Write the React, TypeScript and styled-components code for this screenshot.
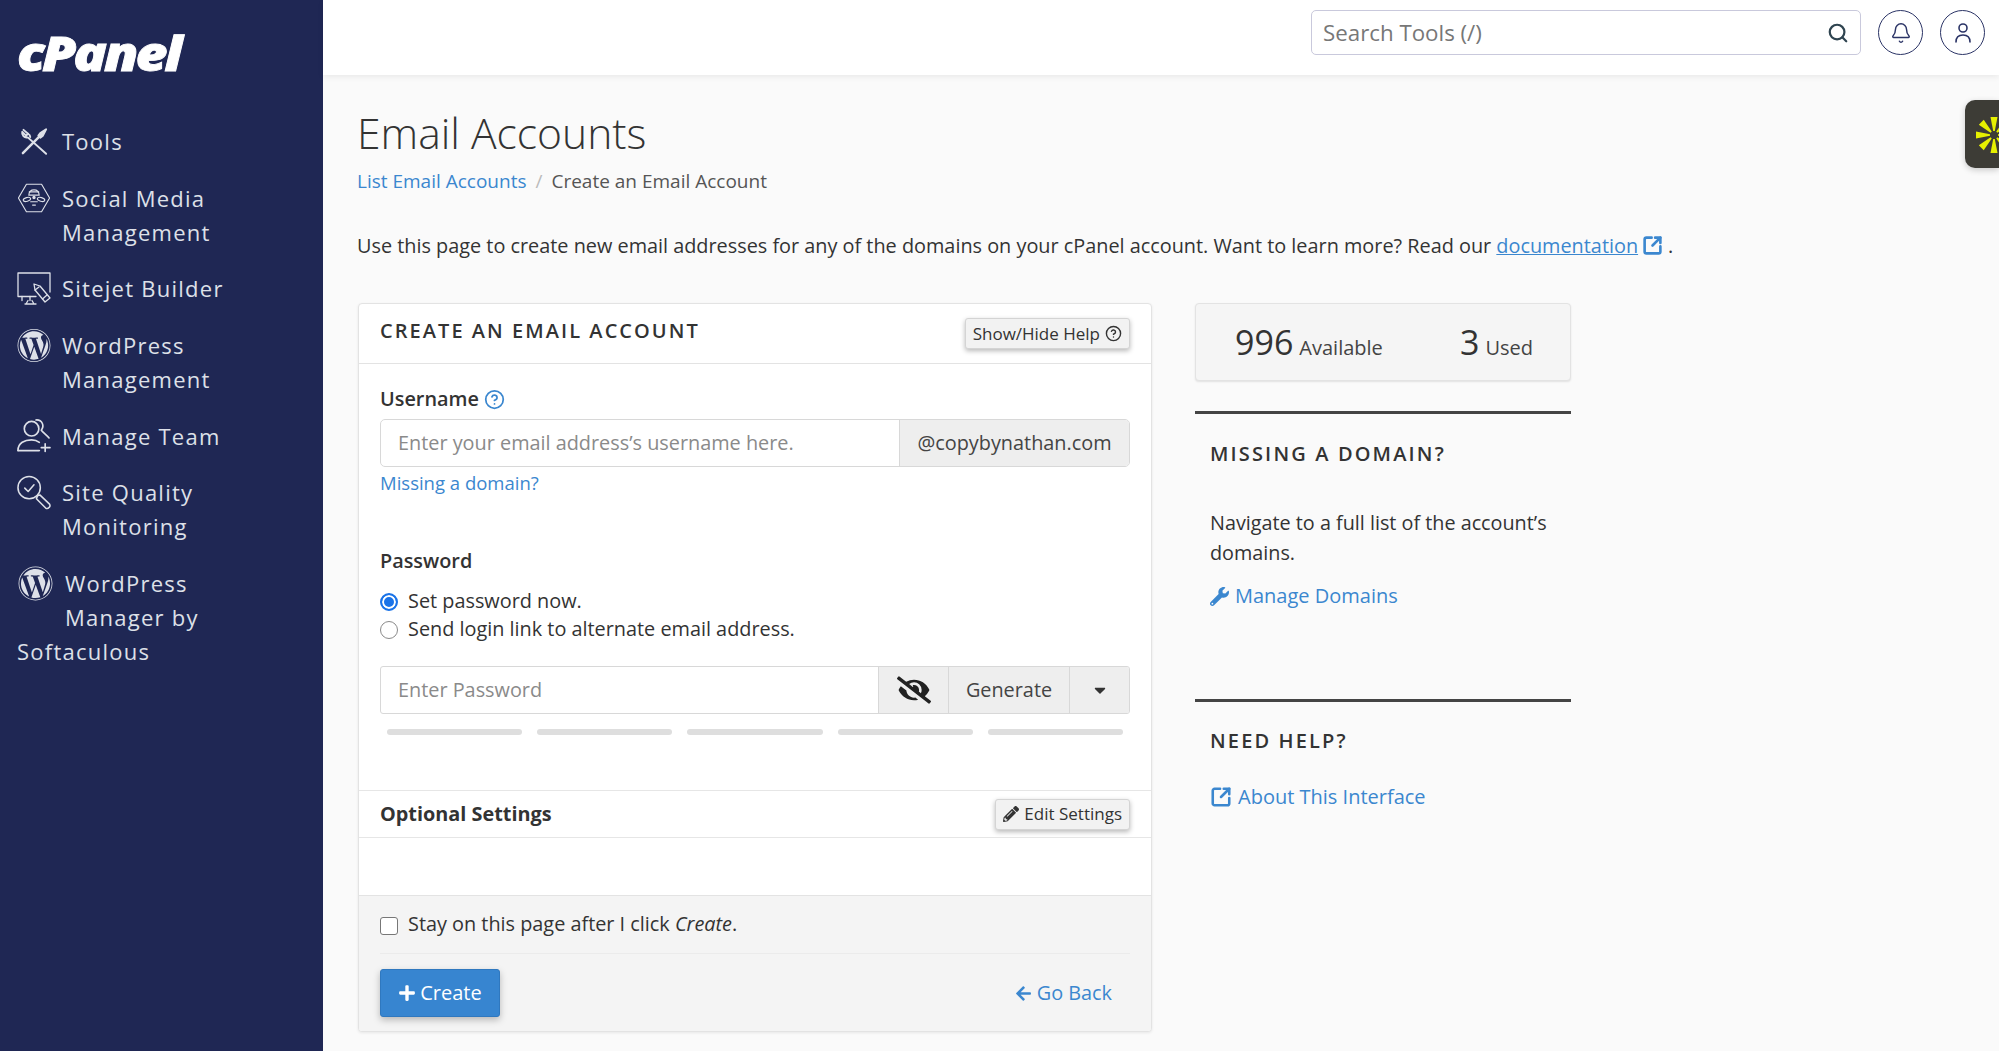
import React from "react";
import styled, { createGlobalStyle } from "styled-components";
import { FaWordpress, FaWrench, FaPencilAlt, FaPlus, FaArrowLeft, FaEyeSlash, FaCaretDown } from "react-icons/fa";
import { Search, Bell, SquareArrowOutUpRight, CircleHelp } from "lucide-react";

const Global = createGlobalStyle`
  html, body { margin: 0; padding: 0; background: #fafafa; }
  body { font-family: "Open Sans", "Liberation Sans", sans-serif; color: #333; font-size: 19.85px; line-height: 28px; }
  * { box-sizing: border-box; }
`;

const Page = styled.div`
  display: flex;
  min-height: 100vh;
  position: relative;
  overflow: hidden;
`;

const Sidebar = styled.aside`
  width: 323px;
  flex: none;
  background: #1f2754;
  color: #dde0e8;
  padding: 0 17px;
`;

const Logo = styled.div`
  height: 106px;
  padding-top: 23px;
  font: italic 800 47px/60px "Open Sans", sans-serif;
  letter-spacing: -2.6px;
  color: #fff;
  -webkit-text-stroke: 0.8px #fff;
  transform: scaleX(1.18);
  transform-origin: left center;
`;

const Nav = styled.nav`
  display: flex;
  flex-direction: column;
  padding-top: 18px;
  gap: 22.7px;
`;

const NavItem = styled.a`
  display: flex;
  gap: 11px;
  font-size: 22px;
  line-height: 34px;
  letter-spacing: 1.25px;
`;

const NavIcon = styled.span`
  flex: none;
  width: 34px;
  height: 34px;
  display: flex;
  align-items: center;
  justify-content: center;
  color: #dde0e8;
`;

const NavLabel = styled.span`
  width: 190px;
`;

const FloatItem = styled.a`
  display: block;
  font-size: 22px;
  line-height: 34px;
  letter-spacing: 1.25px;
  width: 200px;
`;

const FloatIcon = styled.span`
  float: left;
  width: 48px;
  height: 66px;
  padding-left: 1px;
  display: block;
  color: #dde0e8;
`;

const Main = styled.div`
  flex: 1;
  min-width: 0;
  display: flex;
  flex-direction: column;
`;

const TopBar = styled.header`
  height: 75px;
  background: #fff;
  box-shadow: 0 2px 6px rgba(0, 0, 0, 0.07);
  display: flex;
  align-items: center;
  justify-content: flex-end;
  padding: 0 14px 10px 0;
  gap: 17px;
`;

const SearchBox = styled.div`
  width: 550px;
  height: 45px;
  border: 1.5px solid #c9c9dc;
  border-radius: 5px;
  display: flex;
  align-items: center;
  justify-content: space-between;
  padding: 0 11px 0 11px;
  font-size: 22.3px;
  color: #777;
  background: #fff;
`;

const RoundButton = styled.button`
  width: 45px;
  height: 45px;
  border-radius: 50%;
  border: 1.5px solid #2b3466;
  background: #fff;
  padding: 0;
  display: flex;
  align-items: center;
  justify-content: center;
  color: #2b3466;
`;

const Widget = styled.div`
  position: absolute;
  top: 100px;
  right: 0;
  width: 34px;
  height: 68px;
  background: #3d3c36;
  border-radius: 10px 0 0 10px;
  box-shadow: 0 2px 6px rgba(0, 0, 0, 0.2);
  overflow: hidden;
`;

const Content = styled.main`
  padding: 32px 0 0 34px;
`;

const Title = styled.h1`
  margin: 0;
  font-weight: 300;
  font-size: 42.6px;
  line-height: 50px;
  color: #333;
`;

const Crumbs = styled.div`
  margin-top: 10px;
  display: flex;
  gap: 9px;
  color: #555;
  font-size: 19px;
`;

const Sep = styled.span`
  color: #bbb;
`;

const Link = styled.a`
  color: #3b87cf;
`;

const Description = styled.p`
  margin: 37px 0 0;
  color: #333;
  white-space: nowrap;
`;

const DocLink = styled.a`
  color: #3b87cf;
  text-decoration: underline;
`;

const InlineIcon = styled.span`
  display: inline-flex;
  vertical-align: -3px;
  color: #3b87cf;
  margin-left: 4px;
  margin-right: 5px;
`;

const Columns = styled.div`
  margin: 43px 0 0 1px;
  display: flex;
  align-items: flex-start;
  gap: 43px;
`;

const Card = styled.section`
  width: 794px;
  height: 729px;
  border: 1.5px solid #e3e3e3;
  border-radius: 4px;
  background: #fff;
  box-shadow: 0 1px 3px rgba(0, 0, 0, 0.08);
  display: flex;
  flex-direction: column;
  overflow: hidden;
`;

const CardHeader = styled.div`
  height: 60px;
  flex: none;
  border-bottom: 1.5px solid #e3e3e3;
  padding: 13px 21px 0;
  display: flex;
  justify-content: space-between;
  align-items: flex-start;
`;

const CardTitle = styled.h2`
  margin: 0;
  font-size: 20px;
  line-height: 28px;
  font-weight: 600;
  letter-spacing: 2.05px;
  color: #333;
`;

const SmallButton = styled.button`
  height: 31px;
  padding: 0 7px;
  font: 400 17px/28px "Open Sans", sans-serif;
  color: #333;
  background: #f2f2f2;
  border: 1.5px solid #d4d4d4;
  border-radius: 3px;
  box-shadow: 0 2px 5px rgba(0, 0, 0, 0.28);
  display: flex;
  align-items: center;
  gap: 5px;
  white-space: nowrap;
`;

const HelpButton = styled(SmallButton)`
  margin-top: 1px;
`;

const FormBody = styled.div`
  flex: 1;
  padding: 21px 21px 0;
`;

const FieldLabel = styled.div`
  font-weight: 600;
  color: #333;
  display: flex;
  align-items: center;
  gap: 5px;
`;

const SpacedLabel = styled(FieldLabel)`
  margin-top: 50px;
`;

const InputGroup = styled.div`
  display: flex;
  height: 48px;
  margin-top: 6px;
  border: 1.5px solid #d8d8d8;
  border-radius: 5px;
  overflow: hidden;
  background: #fff;
`;

const PasswordGroup = styled(InputGroup)`
  margin-top: 23px;
  border-radius: 3px;
`;

const Placeholder = styled.div`
  flex: 1;
  padding-left: 17px;
  display: flex;
  align-items: center;
  color: #8a8a8a;
`;

const Addon = styled.div<{ $w: number }>`
  width: ${(p) => p.$w}px;
  flex: none;
  background: #eeeeee;
  border-left: 1.5px solid #d8d8d8;
  display: flex;
  align-items: center;
  justify-content: center;
  color: #444;
`;

const DomainLink = styled(Link)`
  display: block;
  margin-top: 2px;
  font-size: 18.5px;
`;

const Radios = styled.div`
  margin-top: 12px;
`;

const OptionRow = styled.label`
  display: flex;
  align-items: center;
  gap: 10px;
  color: #333;
`;

const RadioMark = styled.span<{ $on?: boolean }>`
  width: 18px;
  height: 18px;
  border-radius: 50%;
  flex: none;
  margin-top: 2px;
  border: ${(p) => (p.$on ? "2px solid #1a73e8" : "1.5px solid #8a8a8a")};
  background: ${(p) => (p.$on ? "#1a73e8" : "#fff")};
  box-shadow: ${(p) => (p.$on ? "inset 0 0 0 2px #fff" : "none")};
`;

const CheckMark = styled.span`
  width: 18px;
  height: 18px;
  flex: none;
  margin-top: 3px;
  border: 1.5px solid #777;
  border-radius: 3px;
  background: #fff;
`;

const Bars = styled.div`
  margin-top: 15px;
  padding: 0 7px;
  display: flex;
  gap: 15px;
`;

const Bar = styled.div`
  flex: 1;
  height: 6px;
  border-radius: 3px;
  background: #dedede;
`;

const OptionalRow = styled.div`
  flex: none;
  height: 48px;
  margin-bottom: 57px;
  border-top: 1.5px solid #e6e6e6;
  border-bottom: 1.5px solid #e6e6e6;
  padding: 0 21px;
  display: flex;
  justify-content: space-between;
  align-items: center;
`;

const OptionalTitle = styled.div`
  font-weight: 700;
  color: #333;
`;

const Footer = styled.div`
  flex: none;
  height: 136px;
  background: #f4f4f4;
  border-top: 1.5px solid #e3e3e3;
  padding: 14px 21px 0;
`;

const FooterDivider = styled.div`
  height: 1px;
  margin-top: 15px;
  background: #ebebeb;
`;

const Actions = styled.div`
  margin-top: 15px;
  display: flex;
  justify-content: space-between;
  align-items: center;
  padding-right: 18px;
`;

const CreateButton = styled.button`
  width: 120px;
  height: 48px;
  background: #3785d0;
  border: 1px solid #2f78bf;
  border-radius: 3px;
  color: #fff;
  font: 400 20px/28px "Open Sans", sans-serif;
  box-shadow: 0 3px 7px rgba(0, 0, 0, 0.25);
  display: flex;
  align-items: center;
  justify-content: center;
  gap: 4px;
`;

const BackLink = styled(Link)`
  display: flex;
  align-items: center;
  gap: 5px;
`;

const Aside = styled.aside`
  width: 376px;
`;

const StatBox = styled.div`
  height: 78px;
  background: #f5f5f5;
  border: 1.5px solid #e3e3e3;
  border-radius: 4px;
  box-shadow: 0 1px 2px rgba(0, 0, 0, 0.1);
  display: flex;
  align-items: center;
  padding-left: 39px;
  color: #444;
  font-size: 20px;
`;

const Stat = styled.div<{ $w: number }>`
  width: ${(p) => p.$w}px;
  display: flex;
  align-items: baseline;
  gap: 6px;
`;

const StatNumber = styled.span`
  font-size: 34px;
  line-height: 44px;
  color: #333;
`;

const Block = styled.div<{ $top: number; $pad: number }>`
  margin-top: ${(p) => p.$top}px;
  border-top: 3px solid #444;
  padding: ${(p) => p.$pad}px 15px 0;
`;

const BlockTitle = styled.h3`
  margin: 0;
  font-size: 20px;
  line-height: 28px;
  font-weight: 600;
  letter-spacing: 2.15px;
  color: #333;
`;

const BlockText = styled.p`
  margin: 40px 0 0;
  line-height: 30px;
  font-size: 19.8px;
  color: #333;
`;

const BlockLink = styled(Link)<{ $top: number }>`
  margin-top: ${(p) => p.$top}px;
  font-size: 20px;
  display: flex;
  align-items: center;
  gap: 6px;
`;

function ToolsIcon() {
  return (
    <svg width="31" height="31" viewBox="0 0 24 24" fill="none" stroke="currentColor" strokeWidth="1.5" strokeLinecap="round" strokeLinejoin="round">
      <path d="M3.5 3 L7 6 L5.5 7.5 L2.5 4.5 C2 7 4 9.5 6.8 8.8 L21 21.5" />
      <path d="M7 6 C8 6.5 8.7 7.5 8.7 8.5" />
      <path d="M21 2.5 L18.5 7.5 L16.5 9 L15 7.5 L16.5 5.5 Z" fill="currentColor" />
      <path d="M15.5 8.5 L3 21" strokeWidth="1.9" />
    </svg>
  );
}

function SocialIcon() {
  return (
    <svg width="36" height="32" viewBox="0 0 36 32" fill="none" stroke="currentColor" strokeWidth="1.2" strokeLinejoin="round" strokeLinecap="round">
      <path d="M10 1.5 H26 L34.5 16 L26 30.5 H10 L1.5 16 Z" />
      <path d="M12.5 13 C13 5.5 23 5.5 23.5 13 Z" />
      <path d="M13 9.5 H23" />
      <ellipse cx="10.5" cy="17.5" rx="4" ry="2" transform="rotate(-15 10.5 17.5)" />
      <ellipse cx="25.5" cy="17.5" rx="4" ry="2" transform="rotate(15 25.5 17.5)" />
      <circle cx="18" cy="15.5" r="1.2" fill="currentColor" />
      <path d="M14.5 20 H21.5 M16.5 23.5 H19.5" />
    </svg>
  );
}

function SitejetIcon() {
  return (
    <svg width="34" height="33" viewBox="0 0 34 33" fill="none" stroke="currentColor" strokeWidth="1.3" strokeLinejoin="round" strokeLinecap="round">
      <path d="M19 24.5 H1 V1 H33 V20" />
      <path d="M5 24.5 V28.5 M13 24.5 L13 28.5 M8 32 H19 M11 28.5 L9 32 M15 28.5 L17 32" />
      <path d="M17 12 L18 18 L28 30 L33 26 L23 14 Z" />
      <path d="M18 18 L22 15 M25.5 27 L30 23" />
    </svg>
  );
}

function TeamIcon() {
  return (
    <svg width="35" height="35" viewBox="0 0 35 35" fill="none" stroke="currentColor" strokeWidth="1.7" strokeLinecap="round" strokeLinejoin="round">
      <circle cx="15" cy="10.5" r="7.5" />
      <path d="M1 33 C1 25 8 22 15 22 C18 22 21 23 23 24.5" />
      <path d="M1 33 H23" />
      <path d="M19.5 1.5 C26 1 28.5 7.5 25 12 C27.5 15 30 16.5 33 20" />
      <path d="M29 26 V34 M25 30 H34" />
    </svg>
  );
}

function QualityIcon() {
  return (
    <svg width="35" height="35" viewBox="0 0 35 35" fill="none" stroke="currentColor" strokeWidth="1.6" strokeLinecap="round" strokeLinejoin="round">
      <circle cx="12.5" cy="12.5" r="11.5" />
      <path d="M8 13 L11.5 16.5 L17.5 9.5" />
      <path d="M21 21 L23.5 20 L33.5 29.5 C35 32 32 35 29.5 33.5 L20 24 Z" />
    </svg>
  );
}

function UserIcon() {
  return (
    <svg width="20" height="22" viewBox="0 0 20 22" fill="none" stroke="currentColor" strokeWidth="1.6" strokeLinecap="round">
      <circle cx="10" cy="6" r="4" />
      <path d="M3 20 C3 15 6 13 10 13 C14 13 17 15 17 20" />
    </svg>
  );
}

function BurstIcon() {
  const spokes = [0, 45, 90, 135, 180, 225, 270, 315];
  return (
    <svg width="48" height="68" viewBox="0 0 48 68">
      {spokes.map((a) => (
        <polygon key={a} points="28.2,31 29.8,31 32.5,17 25.5,17" fill="#e6f000" transform={`rotate(${a} 29 35)`} />
      ))}
    </svg>
  );
}

export default function App() {
  return (
    <Page>
      <Global />
      <Sidebar>
        <Logo>cPanel</Logo>
        <Nav>
          <NavItem><NavIcon><ToolsIcon /></NavIcon><NavLabel>Tools</NavLabel></NavItem>
          <NavItem><NavIcon><SocialIcon /></NavIcon><NavLabel>Social Media Management</NavLabel></NavItem>
          <NavItem><NavIcon><SitejetIcon /></NavIcon><NavLabel>Sitejet Builder</NavLabel></NavItem>
          <NavItem><NavIcon><FaWordpress size={35} /></NavIcon><NavLabel>WordPress Management</NavLabel></NavItem>
          <NavItem><NavIcon><TeamIcon /></NavIcon><NavLabel>Manage Team</NavLabel></NavItem>
          <NavItem><NavIcon><QualityIcon /></NavIcon><NavLabel>Site Quality Monitoring</NavLabel></NavItem>
          <FloatItem><FloatIcon><FaWordpress size={35} /></FloatIcon>WordPress Manager by Softaculous</FloatItem>
        </Nav>
      </Sidebar>
      <Main>
        <TopBar>
          <SearchBox>Search Tools (/)<Search size={22} color="#2f4450" strokeWidth={2.4} /></SearchBox>
          <RoundButton><Bell size={22} strokeWidth={1.6} /></RoundButton>
          <RoundButton><UserIcon /></RoundButton>
        </TopBar>
        <Content>
          <Title>Email Accounts</Title>
          <Crumbs>
            <Link>List Email Accounts</Link>
            <Sep>/</Sep>
            <span>Create an Email Account</span>
          </Crumbs>
          <Description>
            Use this page to create new email addresses for any of the domains on your cPanel account. Want to learn more? Read our{" "}
            <DocLink>documentation</DocLink>
            <InlineIcon><SquareArrowOutUpRight size={21} strokeWidth={3} /></InlineIcon>.
          </Description>
          <Columns>
            <Card>
              <CardHeader>
                <CardTitle>CREATE AN EMAIL ACCOUNT</CardTitle>
                <HelpButton>Show/Hide Help <CircleHelp size={17} strokeWidth={2} /></HelpButton>
              </CardHeader>
              <FormBody>
                <FieldLabel>Username <CircleHelp size={21} color="#3b87cf" strokeWidth={2} /></FieldLabel>
                <InputGroup>
                  <Placeholder>Enter your email address’s username here.</Placeholder>
                  <Addon $w={230}>@copybynathan.com</Addon>
                </InputGroup>
                <DomainLink>Missing a domain?</DomainLink>
                <SpacedLabel>Password</SpacedLabel>
                <Radios>
                  <OptionRow><RadioMark $on />Set password now.</OptionRow>
                  <OptionRow><RadioMark />Send login link to alternate email address.</OptionRow>
                </Radios>
                <PasswordGroup>
                  <Placeholder>Enter Password</Placeholder>
                  <Addon $w={70}><FaEyeSlash size={34} color="#222" /></Addon>
                  <Addon $w={121}>Generate</Addon>
                  <Addon $w={60}><FaCaretDown size={18} color="#333" /></Addon>
                </PasswordGroup>
                <Bars><Bar /><Bar /><Bar /><Bar /><Bar /></Bars>
              </FormBody>
              <OptionalRow>
                <OptionalTitle>Optional Settings</OptionalTitle>
                <SmallButton><FaPencilAlt size={16} />Edit Settings</SmallButton>
              </OptionalRow>
              <Footer>
                <OptionRow><CheckMark /><span>Stay on this page after I click <em>Create</em>.</span></OptionRow>
                <FooterDivider />
                <Actions>
                  <CreateButton><FaPlus size={18} />Create</CreateButton>
                  <BackLink><FaArrowLeft size={17} />Go Back</BackLink>
                </Actions>
              </Footer>
            </Card>
            <Aside>
              <StatBox>
                <Stat $w={225}><StatNumber>996</StatNumber>Available</Stat>
                <Stat $w={90}><StatNumber>3</StatNumber>Used</Stat>
              </StatBox>
              <Block $top={30} $pad={26}>
                <BlockTitle>MISSING A DOMAIN?</BlockTitle>
                <BlockText>Navigate to a full list of the account’s domains.</BlockText>
                <BlockLink $top={14}><FaWrench size={19} />Manage Domains</BlockLink>
              </Block>
              <Block $top={89} $pad={25}>
                <BlockTitle>NEED HELP?</BlockTitle>
                <BlockLink $top={28}><SquareArrowOutUpRight size={22} strokeWidth={2.8} />About This Interface</BlockLink>
              </Block>
            </Aside>
          </Columns>
        </Content>
      </Main>
      <Widget><BurstIcon /></Widget>
    </Page>
  );
}
